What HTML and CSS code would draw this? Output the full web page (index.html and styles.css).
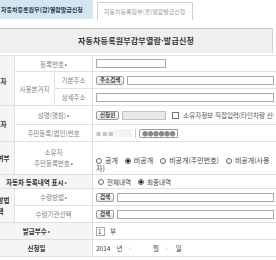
FILE: index.html
```html
<!DOCTYPE html>
<html lang="ko">
<head>
    <meta charset="UTF-8">
    <title>자동차등록원부 열람발급신청</title>
    <link rel="stylesheet" href="styles.css">
</head>
<body>
    <!-- Tabs -->
    <div class="tabs">
        <a class="tab on">자동차등록원부(갑)열람발급신청</a>
        <a class="tab off">자동차등록원부(을)열람발급신청</a>
    </div>

    <!-- Title -->
    <h2 class="title">자동차등록원부갑부열람·발급신청</h2>

    <!-- Form table -->
    <table class="form">
        <colgroup>
            <col class="c1">
            <col class="c2">
            <col class="c3">
            <col>
        </colgroup>
        <tr class="r16">
            <th class="grp" rowspan="3">소유자</th>
            <th class="sub" colspan="2">등록번호<em class="req">•</em></th>
            <td><div class="cell"><input type="text" class="ipt w70"></div></td>
        </tr>
        <tr>
            <th class="sub" rowspan="2">사용본거지</th>
            <th class="sub">기본주소</th>
            <td><div class="cell"><button class="btn">주소검색</button><input type="text" class="ipt fill"></div></td>
        </tr>
        <tr>
            <th class="sub">상세주소</th>
            <td><div class="cell"><input type="text" class="ipt fill"></div></td>
        </tr>
        <tr class="r19">
            <th class="grp" rowspan="2">신청자</th>
            <th class="sub" colspan="2">성명(명칭)<em class="req">•</em></th>
            <td>
                <div class="cell">
                    <button class="btn">신청인</button>
                    <span class="lock"></span>
                    <input type="text" class="ipt off w44" disabled>
                    <span class="chk"></span>
                    <span class="note">소유자정보 직접입력(타인차량 신청시)</span>
                </div>
            </td>
        </tr>
        <tr>
            <th class="sub" colspan="2">주민등록(법인)번호</th>
            <td>
                <div class="cell">
                    <span class="mask">■ ■ ■</span>
                    <span class="bar"></span>
                    <span class="dots">●●●●●●</span>
                </div>
            </td>
        </tr>
        <tr class="r33">
            <th class="grp">공개여부</th>
            <th class="sub two" colspan="2">소유자<br>주민등록번호<em class="req">•</em></th>
            <td class="low">
                <div class="radios">
                    <span class="rd first"></span>공개
                    <span class="rd on"></span>비공개
                    <span class="rd"></span>비공개(주민번호)
                    <span class="rd"></span>비공개(사용자)
                </div>
            </td>
        </tr>
        <tr class="r14">
            <th class="main" colspan="3">자동차 등록내역 표시<em class="req">•</em></th>
            <td>
                <div class="cell tight">
                    <span class="rd"></span>전체내역
                    <span class="rd on gap"></span>최종내역
                </div>
            </td>
        </tr>
        <tr>
            <th class="grp two" rowspan="2">수령방법<br>선택</th>
            <th class="sub" colspan="2">수령방법<em class="req">•</em></th>
            <td><div class="cell"><button class="btn">검색</button><input type="text" class="ipt fill"></div></td>
        </tr>
        <tr>
            <th class="sub" colspan="2">수령기관선택</th>
            <td><div class="cell"><button class="btn">검색</button><input type="text" class="ipt fill"></div></td>
        </tr>
        <tr>
            <th class="main" colspan="3">발급부수<em class="req">•</em></th>
            <td><div class="cell"><input type="text" class="ipt w8" value="1"><span class="unit">부</span></div></td>
        </tr>
        <tr>
            <th class="main" colspan="3">신청일</th>
            <td>
                <div class="cell">
                    <span>2014</span>
                    <span class="year">년</span><span class="sel">ㄴ</span>
                    <span class="month">월</span><span class="sel">ㄴ</span>
                    <span>일</span>
                </div>
            </td>
        </tr>
    </table>
</body>
</html>
```

FILE: styles.css
```css
* {
    margin: 0;
    padding: 0;
    box-sizing: border-box;
}

body {
    font-family: "Noto Sans CJK KR", "Noto Sans", sans-serif;
    font-size: 6.5px;
    color: #444;
    background: #fff;
    width: 276px;
    height: 260px;
    overflow: hidden;
}

/* Tabs */
.tabs {
    display: flex;
    align-items: flex-start;
    gap: 4px;
    height: 20px;
}

.tab {
    display: block;
    font-size: 6px;
    white-space: nowrap;
}

.tab.on {
    width: 93px;
    height: 19px;
    line-height: 19px;
    padding-left: 1px;
    background: #d3e5ee;
    color: #1d3a4e;
    font-weight: bold;
}

.tab.off {
    margin-top: 2px;
    height: 18px;
    line-height: 17px;
    padding: 0 7px 0 6px;
    border: 1px solid #cfcfcf;
    border-bottom: none;
    color: #a0a0a0;
}

/* Title bar */
.title {
    width: 273px;
    height: 25px;
    margin: 8px 0 2px;
    border-top: 1px solid #c4c4c4;
    border-right: 1px solid #d4d4d4;
    background: #efefef;
    color: #333;
    font-size: 8px;
    letter-spacing: 0.2px;
    line-height: 24px;
    text-align: center;
}

/* Form table */
.form {
    width: 298px;
    margin-left: -20px;
    border-collapse: collapse;
    table-layout: fixed;
    border-top: 1px solid #b5b5b5;
}

.form .c1 { width: 34px; }
.form .c2 { width: 40px; }
.form .c3 { width: 38px; }

.form tr { height: 17px; }
.form tr.r14 { height: 14px; }
.form tr.r16 { height: 16px; }
.form tr.r19 { height: 19px; }
.form tr.r33 { height: 33px; }

.form th,
.form td {
    border: 1px solid #e0e0e0;
    line-height: 8px;
    white-space: nowrap;
}

.form th {
    text-align: center;
    font-weight: normal;
}

.form th.two { line-height: 11px; }

.form th.grp,
.form th.main {
    background: #f5f5f5;
    color: #333;
    font-weight: bold;
}

.form th.sub {
    background: #fff;
    color: #808080;
}

.req {
    font-style: normal;
    color: #d84a3a;
    margin-left: 1px;
}

.form td {
    padding: 0 3px;
    color: #444;
}

.form td.low {
    vertical-align: bottom;
    padding-bottom: 2px;
}

.cell {
    display: flex;
    align-items: center;
    gap: 3px;
    overflow: hidden;
}

.cell.tight { gap: 1px; }

/* Controls */
.ipt {
    height: 9px;
    border: 1px solid #a9a9a9;
    background: #fff;
    font-family: inherit;
    font-size: 6px;
    color: #333;
    padding: 0 2px;
    outline: none;
}

.ipt.fill { flex: 1; min-width: 0; }
.ipt.w70 { width: 70px; }
.ipt.w44 { width: 44px; }
.ipt.w8 { width: 9px; padding: 0 1px; }

.ipt.off {
    background: #e8e8e8;
    border-color: #c2c2c2;
}

.btn {
    height: 9px;
    padding: 0 3px;
    border: 1px solid #9c9c9c;
    border-radius: 2px;
    background: linear-gradient(#fff, #e4e4e4);
    font-family: inherit;
    font-size: 5.5px;
    font-weight: bold;
    color: #333;
    line-height: 7px;
    white-space: nowrap;
}

.lock {
    width: 8px;
    height: 8px;
    margin-right: -3px;
    background: linear-gradient(90deg, #b9bdc4 50%, #d9dce0 50%);
}

.chk {
    width: 7px;
    height: 7px;
    margin-left: 3px;
    border: 1px solid #777;
    background: #fff;
    flex: none;
}

.note {
    color: #555;
    margin-left: 1px;
}

.mask {
    width: 36px;
    color: #c4c4c4;
    font-size: 5px;
    background: linear-gradient(90deg, #fff, #f0f0f0);
}

.bar {
    width: 1px;
    height: 9px;
    background: #ccc;
}

.dots {
    height: 9px;
    padding: 0 2px;
    border: 1px solid #999;
    border-radius: 2px 0 0 2px;
    color: #8a8a8a;
    font-size: 6px;
    line-height: 7px;
    letter-spacing: -0.5px;
}

.radios {
    white-space: normal;
    font-size: 7px;
    line-height: 8px;
    color: #444;
}

.rd {
    display: inline-block;
    width: 6px;
    height: 6px;
    border: 1px solid #666;
    border-radius: 50%;
    background: #fff;
    vertical-align: -1px;
    margin: 0 2px 0 2px;
}

.radios .rd { margin: 0 3px 0 5px; }
.radios .rd.first { margin-left: 0; }

.rd.on {
    background: radial-gradient(circle, #111 1.3px, #fff 1.8px);
}

.rd.gap { margin-left: 6px; }

.unit { margin-left: 2px; }

.sel {
    color: #b0b0b0;
    font-size: 5px;
    margin: 0 3px;
}

.year { margin-left: 3px; }
.month { margin-left: 14px; }
```
